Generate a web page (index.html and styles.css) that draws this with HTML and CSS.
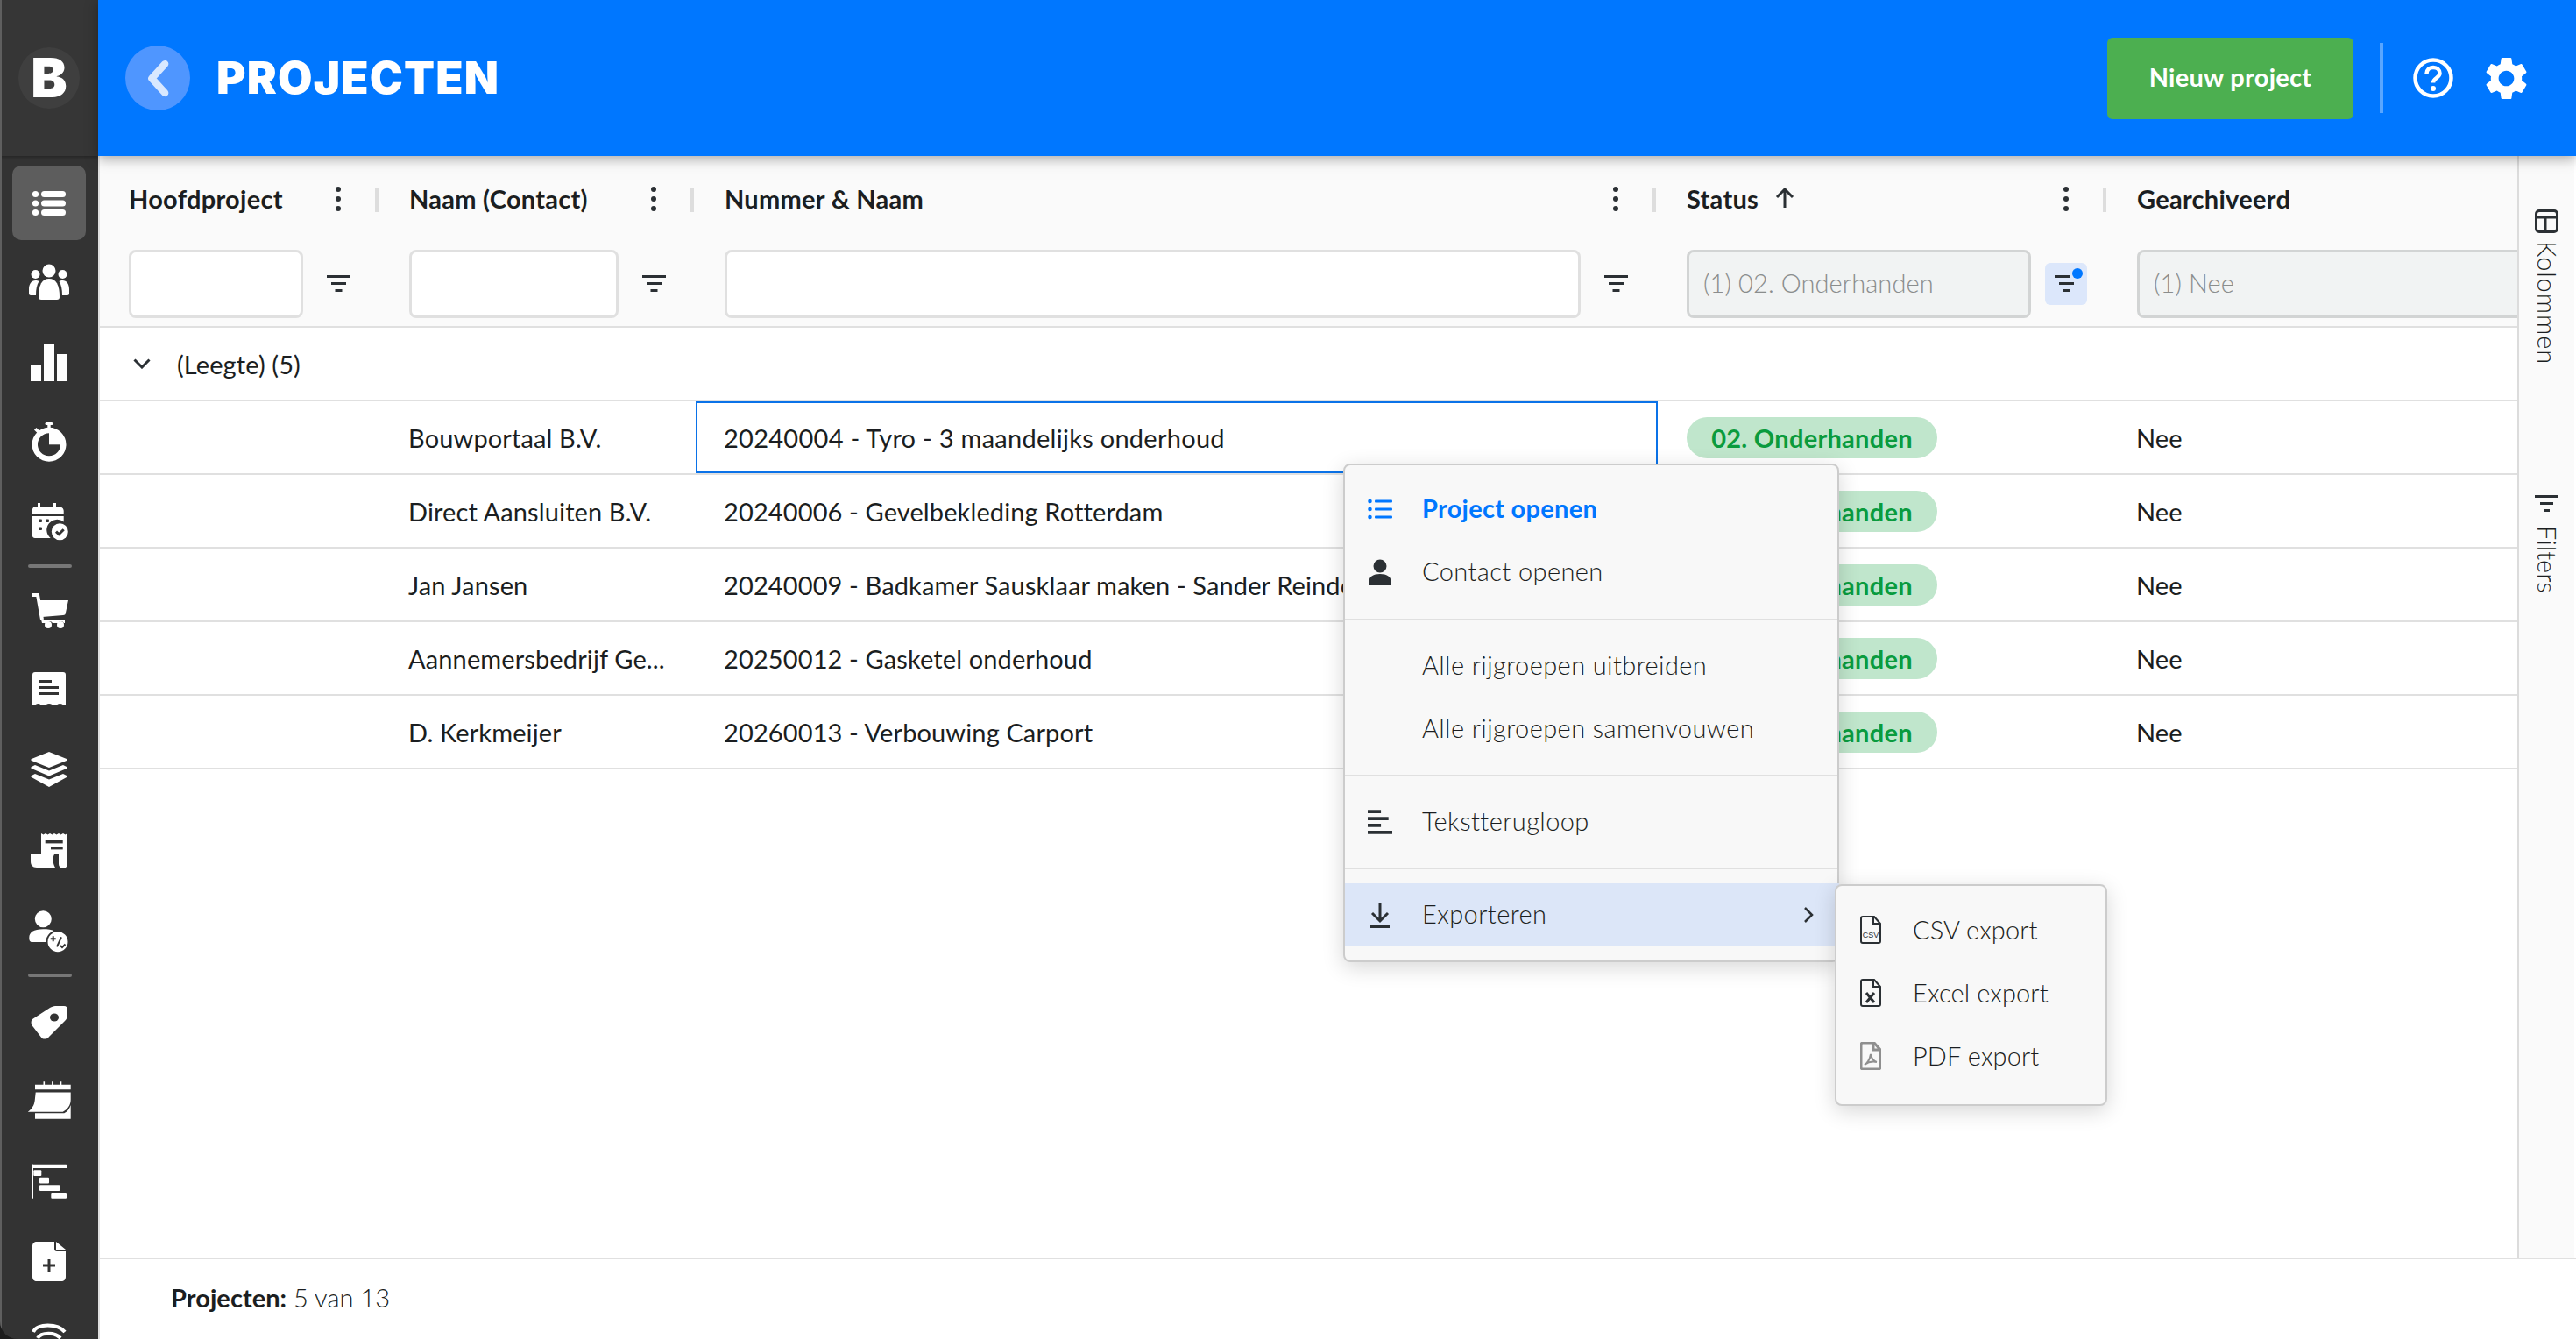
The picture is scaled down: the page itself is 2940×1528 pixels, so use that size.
FILE: index.html
```html
<!DOCTYPE html>
<html lang="nl">
<head>
<meta charset="utf-8">
<title>Projecten</title>
<link rel="stylesheet" href="styles.css">
</head>
<body>
<div class="app">
  <aside class="sidebar">
    <div class="brand"><span class="brand-mark">B</span></div>
    <nav class="nav">
      <a class="nav-item is-active"><svg class="ni" viewBox="0 0 48 48"><circle cx="8.5" cy="13.5" r="3.6"/><circle cx="8.5" cy="24" r="3.6"/><circle cx="8.5" cy="34.500" r="3.6"/><rect x="15" y="10" width="28" height="7" rx="3.500"/><rect x="15" y="20.500" width="28" height="7" rx="3.500"/><rect x="15" y="31" width="28" height="7" rx="3.500"/></svg></a>
      <a class="nav-item"><svg class="ni" viewBox="0 0 48 48"><circle cx="24" cy="10" r="7.500"/><circle cx="8.500" cy="14" r="5"/><circle cx="39.500" cy="14" r="5"/><path d="M12 40c0-14 4-21 12-21s12 7 12 21c0 2-1 3-3 3H15c-2 0-3-1-3-3z"/><path d="M8.500 21c1.500 0 3 .3 4 1-2.500 4-3.500 9-3.500 16H3c-1 0-2-1-2-2v-5c0-6 3-10 7.500-10z"/><path d="M39.500 21c-1.500 0-3 .3-4 1 2.500 4 3.500 9 3.500 16h6c1 0 2-1 2-2v-5c0-6-3-10-7.500-10z"/></svg></a>
      <a class="nav-item"><svg class="ni" viewBox="0 0 48 48"><rect x="3" y="27" width="12" height="18"/><rect x="18" y="3" width="12" height="42"/><rect x="33" y="14" width="12" height="31"/></svg></a>
      <a class="nav-item"><svg class="ni" viewBox="0 0 48 48"><rect x="19.500" y="1" width="9" height="3" rx="1.500"/><rect x="22.300" y="3" width="3.400" height="5"/><path d="M7 9.500l2.500-2.500 4 4-2.500 2.500z"/><path fill-rule="evenodd" d="M24 6.800a19.500 19.500 0 1 1 0 39 19.500 19.500 0 0 1 0-39zm0 6.500a13 13 0 1 0 0 26 13 13 0 0 0 0-26z"/><path d="M24 26.300V13h13.300v13.300z"/></svg></a>
      <a class="nav-item"><svg class="ni" viewBox="0 0 48 48"><rect x="11" y="2" width="3" height="6"/><rect x="29" y="2" width="3" height="6"/><path d="M9 6h26c3 0 5.700 2 5.700 5v4H4.700v-4c0-3 1.300-5 4.300-5zM4.700 17h36v6.500a11.500 11.500 0 0 0-15 18.500H8c-2 0-3.300-1.500-3.300-3.500z"/><g class="ni-dark"><rect x="12" y="20.500" width="4" height="3.500" rx="1"/><rect x="20" y="20.500" width="4" height="3.500" rx="1"/><rect x="12" y="29.500" width="4" height="3.500" rx="1"/></g><circle cx="36.300" cy="34.700" r="9.500"/><path class="ni-cut" d="M32 34.700l3.200 3 5.500-5.500"/></svg></a>
      <div class="nav-rule"></div>
      <a class="nav-item"><svg class="ni" viewBox="0 0 48 48"><path class="ni-line" d="M4 6h7l5 28"/><path d="M13 12h33l-3 14c0 2-1 3-3 3l-24 2zM15 34h27v4h-1a4 4 0 0 0-7 0h-6a4 4 0 0 0-7 0h-5z"/><circle cx="23" cy="40" r="4"/><circle cx="37" cy="40" r="4"/></svg></a>
      <a class="nav-item"><svg class="ni" viewBox="0 0 48 48"><path d="M8 3h32c2 0 3 1 3 3v35c-3 0-4-2-6.500-2s-4 2-6 2-4-2-6.500-2-4 2-6.500 2-4-2-6-2-3.500 2-6.500 2V6c0-2 1-3 3-3z"/><g class="ni-dark"><rect x="13" y="12" width="14" height="3"/><rect x="13" y="19" width="22" height="3"/><rect x="13" y="26" width="22" height="3"/></g></svg></a>
      <a class="nav-item"><svg class="ni" viewBox="0 0 48 48"><path d="M24 3l20 8c1 .5 1 1.500 0 2l-20 8-20-8c-1-.5-1-1.500 0-2z"/><path d="M8 18l16 6.500L40 18l4 2c1 .5 1 1.500 0 2l-20 8.500L4 22c-1-.5-1-1.500 0-2z"/><path d="M8 28l16 6.500L40 28l4 2c1 .5 1 1.500 0 2l-20 11-20-11c-1-.5-1-1.500 0-2z"/></svg></a>
      <a class="nav-item"><svg class="ni" viewBox="0 0 48 48"><path d="M15 5l2.500 1.500L20 5l2.500 1.500L25 5l2.500 1.500L30 5l2.500 1.500L35 5l2.500 1.500L40 5l2.500 1.500L45 5v35a5 5 0 0 1-10 0V28H15z"/><path d="M3 29h27c-2 3-2 10 1 15H10c-5 0-7-3-7-7z"/><g class="ni-dark"><rect x="19.700" y="13" width="20" height="3.400"/><rect x="26" y="20" width="13.700" height="3.400"/></g></svg></a>
      <a class="nav-item"><svg class="ni" viewBox="0 0 48 48"><circle cx="17.300" cy="11.700" r="9.500"/><path d="M1.300 33c0-6 5-9.700 16-9.700 5 0 10 .5 13.700 2.700-6 3-8 7-7 12H5c-3 0-3.700-2-3.700-5z"/><circle cx="34" cy="37.700" r="12.500" class="ni-ring"/><path class="ni-cut2" d="M25.700 34.300h6M28.700 31.300v6M33 43.300l5-11M37 42l2 2 3.500-3.500"/></svg></a>
      <div class="nav-rule nav-rule-wide"></div>
      <a class="nav-item"><svg class="ni" viewBox="0 0 48 48"><path d="M5 21l20-13c2-1 4-2 6-2h10c3 0 4 2 4 4v6c0 3-1 5-3 7L24 41c-2 3-5 3-8 2L6 30c-3-3-3-7-1-9z"/><ellipse class="ni-dark" cx="30" cy="19" rx="5" ry="4.500"/></svg></a>
      <a class="nav-item"><svg class="ni" viewBox="0 0 48 48"><path d="M8 4.700h9.500V1.300h1.600v3.400h8V1.300h1.600v3.400h8V1.300h1.600v3.400h10.400v5.600H8z"/><path d="M8.700 13.500h40V22c0 6-3.500 11-9 13.700H-.3c5-3.500 7.500-8 8-13z"/><path d="M8 37.300h33.300c3.500-1.500 6-5 7.400-9.300v15.700H8z"/></svg></a>
      <a class="nav-item"><svg class="ni" viewBox="0 0 48 48"><rect x="4" y="4.700" width="40" height="4.300" rx=".5"/><rect x="4" y="4.700" width="2" height="39"/><rect x="6.300" y="11.300" width="9" height="6.700" rx="1"/><rect x="13" y="19.700" width="11" height="6.700" rx="1"/><rect x="13" y="28.300" width="23.300" height="6.700" rx="1"/><rect x="26.300" y="37" width="17.700" height="6.700" rx="1"/></svg></a>
      <a class="nav-item"><svg class="ni" viewBox="0 0 48 48"><path d="M10 2h20v8c0 2 1 3 3 3h10v29c0 3-2 5-5 5H10c-3 0-5-2-5-5V7c0-3 2-5 5-5zM32 2l11 9H32z"/><path class="ni-cut" d="M17 29h14M24 22v14"/></svg></a>
      <a class="nav-item"><svg class="ni" viewBox="0 0 48 48"><path class="ni-line" d="M6 14c4-10 28-10 36 0M11 21c4-7 20-7 26 0M17 27c3-3 11-3 14 0"/></svg></a>
    </nav>
  </aside>

  <main class="main">
    <header class="topbar">
      <a class="back"><svg viewBox="0 0 40 60" class="back-icon"><path d="M31 8L11 30l20 22"/></svg></a>
      <h1 class="title">PROJECTEN</h1>
      <div class="top-actions">
        <button class="btn-new">Nieuw project</button>
        <span class="top-rule"></span>
        <svg class="top-icon top-help" viewBox="0 0 46 46"><circle cx="23" cy="23" r="20.500"/><path d="M15.500 18c0-4 3-7 7.500-7s7.500 3 7.500 6.500c0 5.500-7.500 5.500-7.500 11"/><circle class="dot" cx="23" cy="35" r="3"/></svg>
        <svg class="top-gear" viewBox="0 0 24 24"><path d="M19.140 12.940c.04-.3.060-.61.060-.94 0-.32-.02-.64-.07-.94l2.030-1.580a.49.49 0 0 0 .12-.61l-1.920-3.320a.488.488 0 0 0-.59-.22l-2.390.96c-.5-.38-1.030-.7-1.620-.94l-.36-2.540a.484.484 0 0 0-.48-.41h-3.840c-.24 0-.43.17-.47.41l-.36 2.540c-.59.24-1.130.57-1.620.94l-2.390-.96c-.22-.08-.47 0-.59.22L2.740 8.870c-.12.21-.08.47.12.61l2.030 1.580c-.05.3-.09.63-.09.94s.02.64.07.94l-2.030 1.580a.49.49 0 0 0-.12.61l1.920 3.320c.12.22.37.29.59.22l2.390-.96c.5.38 1.030.7 1.620.94l.36 2.540c.05.24.24.41.48.41h3.840c.24 0 .44-.17.47-.41l.36-2.540c.59-.24 1.130-.56 1.620-.94l2.390.96c.22.08.47 0 .59-.22l1.920-3.320c.12-.22.07-.47-.12-.61l-2.010-1.580zM12 15.600c-1.980 0-3.600-1.620-3.600-3.600s1.620-3.600 3.600-3.600 3.600 1.620 3.600 3.600-1.620 3.600-3.600 3.600z"/></svg>
      </div>
    </header>

    <div class="content">
      <section class="grid">
        <div class="thead">
          <div class="th">
            <div class="th-label"><span class="th-text">Hoofdproject</span><span class="kebab"><i></i><i></i><i></i></span><span class="th-sep"></span></div>
            <div class="th-filter"><span class="input"></span><span class="fbtn"><svg class="ficon" viewBox="0 0 27 20"><path d="M0 1.500h27M5 9.500h17M9.500 17.500h8"/></svg></span></div>
          </div>
          <div class="th">
            <div class="th-label"><span class="th-text">Naam (Contact)</span><span class="kebab"><i></i><i></i><i></i></span><span class="th-sep"></span></div>
            <div class="th-filter"><span class="input"></span><span class="fbtn"><svg class="ficon" viewBox="0 0 27 20"><path d="M0 1.500h27M5 9.500h17M9.500 17.500h8"/></svg></span></div>
          </div>
          <div class="th">
            <div class="th-label"><span class="th-text">Nummer &amp; Naam</span><span class="kebab"><i></i><i></i><i></i></span><span class="th-sep"></span></div>
            <div class="th-filter"><span class="input"></span><span class="fbtn"><svg class="ficon" viewBox="0 0 27 20"><path d="M0 1.500h27M5 9.500h17M9.500 17.500h8"/></svg></span></div>
          </div>
          <div class="th">
            <div class="th-label"><span class="th-text">Status</span><svg class="sort" viewBox="0 0 22 24"><path d="M11 23V2M2 11l9-9 9 9"/></svg><span class="kebab"><i></i><i></i><i></i></span><span class="th-sep"></span></div>
            <div class="th-filter"><span class="input is-set">(1) 02. Onderhanden</span><span class="fbtn is-on"><svg class="ficon" viewBox="0 0 27 20"><path d="M0 1.500h18M5 9.500h17M9.500 17.500h8"/></svg><b class="fdot"></b></span></div>
          </div>
          <div class="th th-last">
            <div class="th-label"><span class="th-text">Gearchiveerd</span></div>
            <div class="th-filter"><span class="input is-set is-wide">(1) Nee</span></div>
          </div>
        </div>

        <div class="group"><svg class="chev" viewBox="0 0 20 12"><path d="M1.500 1.500L10 10l8.500-8.500"/></svg><span>(Leegte) (5)</span></div>

        <div class="row"><div class="td"></div><div class="td">Bouwportaal B.V.</div><div class="td is-focus">20240004 - Tyro - 3 maandelijks onderhoud</div><div class="td"><span class="pill">02. Onderhanden</span></div><div class="td">Nee</div></div>
        <div class="row"><div class="td"></div><div class="td">Direct Aansluiten B.V.</div><div class="td">20240006 - Gevelbekleding Rotterdam</div><div class="td"><span class="pill">02. Onderhanden</span></div><div class="td">Nee</div></div>
        <div class="row"><div class="td"></div><div class="td">Jan Jansen</div><div class="td">20240009 - Badkamer Sausklaar maken - Sander Reinders</div><div class="td"><span class="pill">02. Onderhanden</span></div><div class="td">Nee</div></div>
        <div class="row"><div class="td"></div><div class="td">Aannemersbedrijf Ge...</div><div class="td">20250012 - Gasketel onderhoud</div><div class="td"><span class="pill">02. Onderhanden</span></div><div class="td">Nee</div></div>
        <div class="row"><div class="td"></div><div class="td">D. Kerkmeijer</div><div class="td">20260013 - Verbouwing Carport</div><div class="td"><span class="pill">02. Onderhanden</span></div><div class="td">Nee</div></div>
      </section>

      <aside class="tools">
        <div class="tool tool-cols"><svg class="tool-icon" viewBox="0 0 27 27"><rect x="1.500" y="1.500" width="24" height="24" rx="3.500"/><path d="M1.500 9h24M12 9v16.500"/></svg><span>Kolommen</span></div>
        <div class="tool tool-filt"><svg class="tool-icon" viewBox="0 0 27 20"><path d="M0 1.500h27M6 9.500h15M10 17.500h7"/></svg><span>Filters</span></div>
      </aside>
    </div>

    <footer class="footer"><strong>Projecten:</strong>&nbsp;5 van 13</footer>
  </main>

  <div class="menu menu-main">
    <div class="menu-group">
      <div class="mi is-blue"><svg class="mi-icon" viewBox="0 0 28 24"><circle cx="2.500" cy="3" r="2.300"/><circle cx="2.500" cy="12" r="2.300"/><circle cx="2.500" cy="21" r="2.300"/><rect x="8" y="1.500" width="20" height="3" rx="1"/><rect x="8" y="10.500" width="20" height="3" rx="1"/><rect x="8" y="19.500" width="20" height="3" rx="1"/></svg><span>Project openen</span></div>
      <div class="mi"><svg class="mi-icon" viewBox="0 0 28 30"><circle cx="14" cy="8" r="7.500"/><path d="M1.500 30v-5c0-5 5-8 12.500-8s12.500 3 12.500 8v5z"/></svg><span>Contact openen</span></div>
    </div>
    <div class="menu-group">
      <div class="mi"><i class="mi-blank"></i><span>Alle rijgroepen uitbreiden</span></div>
      <div class="mi"><i class="mi-blank"></i><span>Alle rijgroepen samenvouwen</span></div>
    </div>
    <div class="menu-group">
      <div class="mi"><svg class="mi-icon" viewBox="0 0 26 26"><path d="M0 2h14M0 9.500h22M0 16.500h14M0 24h26" class="mi-stroke"/></svg><span>Tekstterugloop</span></div>
    </div>
    <div class="menu-group">
      <div class="mi is-hover"><svg class="mi-icon" viewBox="0 0 24 30"><path d="M12 1v20M3 13l9 9 9-9M1 28.500h22" class="mi-stroke mi-thin"/></svg><span>Exporteren</span><svg class="mi-chev" viewBox="0 0 12 20"><path d="M2 2l8 8-8 8"/></svg></div>
    </div>
  </div>

  <div class="menu menu-sub">
    <div class="menu-group">
      <div class="mi mi-sub"><svg class="file-icon" viewBox="0 0 24 32"><path d="M3 1h13l7 8v20c0 1-1 2-2 2H3c-1 0-2-1-2-2V3c0-1 1-2 2-2zM15 1v8h8"/><text x="12" y="25" class="file-label">CSV</text></svg><span>CSV export</span></div>
      <div class="mi mi-sub"><svg class="file-icon" viewBox="0 0 24 32"><path d="M3 1h13l7 8v20c0 1-1 2-2 2H3c-1 0-2-1-2-2V3c0-1 1-2 2-2zM15 1v8h8"/><path d="M7 16l9 11M16 16l-9 11" class="file-x"/></svg><span>Excel export</span></div>
      <div class="mi mi-sub"><svg class="file-icon is-gray" viewBox="0 0 24 32"><path d="M3 1h13l7 8v20c0 1-1 2-2 2H3c-1 0-2-1-2-2V3c0-1 1-2 2-2zM15 1v8h8"/><path d="M5 26c3-1 6-6 7-12 1 5 3 8 7 9-5-1-10 0-14 3z" class="file-pdf"/></svg><span>PDF export</span></div>
    </div>
  </div>
</div>
</body>
</html>
```

FILE: styles.css
```css
* { box-sizing: border-box; }
html, body { margin: 0; height: 100%; overflow: hidden; background: #1c1c1c; }
body { font-family: Lato, "Noto Sans", sans-serif; font-size: 29px; letter-spacing: .27px; color: #1b1e21; }

.app { position: relative; display: flex; height: 100vh; overflow: hidden; border-bottom-left-radius: 20px; }

/* sidebar */
.sidebar { flex: 0 0 112px; display: flex; flex-direction: column; background: #333; border-left: 2px solid #5f5f5f; height: 100%; overflow: hidden; }
.brand { flex: 0 0 178px; display: flex; align-items: center; justify-content: center; background: #363636; box-shadow: 0 2px 3px rgba(0,0,0,.25); margin-left: -2px; }
.brand-mark { width: 70px; height: 70px; border-radius: 50%; background: #3f3f3f; color: #fff; font-family: Inter, sans-serif; font-weight: 900; font-size: 62px; letter-spacing: 0; line-height: 70px; text-align: center; }
.nav { display: flex; flex-direction: column; gap: 6px; padding-top: 11px; margin-left: -2px; }
.nav-item { flex: 0 0 85px; width: 84px; margin-left: 14px; display: flex; align-items: center; justify-content: center; border-radius: 10px; }
.nav-item.is-active { background: #5d5d5d; }
.nav-rule { height: 4px; width: 50px; margin-left: 32px; background: #777; border-radius: 2px; flex: none; }
.nav-rule-wide { margin-top: 2px; margin-bottom: 2px; }
.ni { width: 48px; height: 48px; fill: #fff; overflow: visible; flex: none; }
.ni-dark { fill: #333; }
.ni-line { fill: none; stroke: #fff; stroke-width: 4; }
.ni-cut { fill: none; stroke: #333; stroke-width: 3; }
.ni-cut2 { fill: none; stroke: #333; stroke-width: 2; }
.ni-ring { stroke: #333; stroke-width: 2; }

/* main */
.main { flex: 1; min-width: 0; display: flex; flex-direction: column; background: #fff; }
.topbar { position: relative; z-index: 2; flex: 0 0 178px; display: flex; align-items: center; padding-left: 31px; padding-right: 50px; background: #0077ff; box-shadow: 0 3px 14px rgba(0,0,0,.35); }
.back { width: 74px; height: 74px; border-radius: 50%; background: #4f96ff; display: flex; align-items: center; justify-content: center; }
.back-icon { width: 30px; height: 45px; fill: none; stroke: #d9e8ff; stroke-width: 11; stroke-linejoin: round; stroke-linecap: round; }
.title { margin: 0 0 0 30px; color: #fff; font-family: Inter, sans-serif; font-weight: 900; font-size: 51px; line-height: 60px; letter-spacing: 1.2px; }
.top-actions { margin-left: auto; display: flex; align-items: center; }
.btn-new { width: 281px; height: 93px; border: 0; border-radius: 6px; background: #4caf50; color: #fff; font-family: Lato, sans-serif; font-size: 29px; letter-spacing: .27px; font-weight: 700; padding: 0 0 3px; }
.top-rule { width: 4px; height: 80px; margin: 0 34px 0 30px; background: rgba(255,255,255,.35); }
.top-help { width: 46px; height: 46px; fill: none; stroke: #fff; stroke-width: 4.500; }
.top-help .dot { fill: #fff; stroke: none; }
.top-gear { width: 59px; height: 59px; fill: #fff; margin-left: 31px; }

/* content */
.content { flex: 1; min-height: 0; display: flex; border-left: 2px solid #e0e0e0; }
.grid { flex: 1; min-width: 0; overflow: hidden; background: #fff; }
.thead, .row { display: grid; grid-template-columns: 320px 360px 1098px 514px 1fr; }
.thead { background: #fafafa; border-bottom: 2px solid #e0e0e0; height: 196px; }
.th { min-width: 0; display: flex; flex-direction: column; padding-top: 28px; overflow: hidden; }
.th-label { height: 40px; display: flex; align-items: center; padding-left: 33px; position: relative; }
.th-text { font-weight: 700; white-space: nowrap; }
.sort { width: 22px; height: 24px; margin-left: 19px; fill: none; stroke: #2b3034; stroke-width: 3; }
.kebab { position: absolute; right: 45px; top: 7px; width: 6px; height: 28px; display: flex; flex-direction: column; justify-content: space-between; }
.kebab i { display: block; width: 6px; height: 6px; border-radius: 50%; background: #2b3034; }
.th-sep { position: absolute; right: 2px; top: 8px; width: 4px; height: 28px; background: #ddd; }
.th-filter { margin-top: 39px; height: 78px; display: flex; align-items: center; padding-left: 33px; }
.input { flex: 1; min-width: 0; height: 78px; border: 3px solid #e0e0e0; border-radius: 8px; background: #fff; display: flex; align-items: center; padding: 0 0 4px 16px; white-space: nowrap; color: #8a8d8d; font-weight: 300; letter-spacing: .1px; }
.input.is-set { background: #f1f3f3; border-color: #d2d4d4; }
.input.is-wide { flex: none; width: 520px; }
.fbtn { position: relative; flex: 0 0 80px; margin-right: 8px; height: 48px; display: flex; align-items: center; justify-content: center; }
.fbtn.is-on::before { content: ""; position: absolute; left: 16px; top: 0; width: 48px; height: 48px; background: #dce7fb; border-radius: 6px; }
.ficon { position: relative; width: 27px; height: 20px; fill: none; stroke: #2b3034; stroke-width: 3; }
.fdot { position: absolute; left: 47px; top: 6px; width: 12px; height: 12px; border-radius: 50%; background: #0077ff; }

.group { height: 84px; display: flex; align-items: center; padding-left: 38px; gap: 30px; border-bottom: 2px solid #e0e0e0; letter-spacing: .1px; }
.chev { width: 20px; height: 12px; fill: none; stroke: #2b3034; stroke-width: 3; }
.row { height: 84px; border-bottom: 2px solid #e0e0e0; }
.td { min-width: 0; display: flex; align-items: center; padding-left: 32px; white-space: nowrap; overflow: hidden; letter-spacing: .12px; }
.td.is-focus { border: 2px solid #0a72e8; padding-left: 30px; height: 82px; letter-spacing: .27px; }
.pill { height: 47px; width: 286px; margin-left: 1px; border-radius: 24px; background: #c0e6cc; color: #0a9b3e; font-weight: 700; letter-spacing: .27px; display: flex; align-items: center; justify-content: center; }

/* right tools */
.tools { flex: 0 0 67px; display: flex; flex-direction: column; background: #fafafa; border-left: 2px solid #dcdcdc; border-right: 2px solid #fff; padding-top: 61px; }
.tool { display: flex; flex-direction: column; align-items: center; }
.tool span { writing-mode: vertical-rl; font-weight: 300; line-height: 28px; }
.tool-cols span { letter-spacing: .9px; }
.tool-filt span { letter-spacing: 0; }
.tool-icon { width: 27px; fill: none; stroke: #2b3034; stroke-width: 3; }
.tool-cols .tool-icon { height: 27px; margin-bottom: 9px; }
.tool-filt { margin-top: 149px; }
.tool-filt .tool-icon { height: 20px; margin-bottom: 15px; }

/* footer */
.footer { flex: 0 0 93px; display: flex; align-items: center; padding: 0 0 4px 81px; border-top: 2px solid #e0e0e0; border-left: 2px solid #e0e0e0; background: #fff; white-space: pre; font-weight: 300; letter-spacing: .05px; }
.footer strong { font-weight: 700; }

/* context menus */
.menu { position: absolute; z-index: 5; background: #f8f8f8; border: 2px solid #ccc; border-radius: 8px; box-shadow: 0 6px 24px rgba(0,0,0,.16); }
.menu-main { left: 1533px; top: 529px; width: 566px; }
.menu-sub { left: 2094px; top: 1009px; width: 311px; height: 253px; z-index: 6; }
.menu-group { padding: 16px 0; border-bottom: 2px solid #e0e0e0; }
.menu-group:first-child { padding: 14px 0 17px; }
.menu-group:last-child { border-bottom: 0; }
.mi { position: relative; height: 72px; display: flex; align-items: center; padding-left: 26px; font-weight: 300; letter-spacing: .4px; color: #1b1e21; white-space: nowrap; }
.mi > span { margin-bottom: 3px; }
.mi-icon { flex: none; width: 28px; height: 30px; margin-right: 34px; fill: #2b3034; }
.mi-blank { flex: none; width: 28px; margin-right: 34px; }
.mi.is-blue { color: #0077ff; font-weight: 700; letter-spacing: .27px; }
.mi.is-blue .mi-icon { fill: #0077ff; height: 24px; }
.mi-stroke { fill: none; stroke: #2b3034; stroke-width: 3.500; }
.mi-thin { stroke-width: 3; }
.mi.is-hover { background: #dce6f8; margin-right: -2px; }
.mi-chev { position: absolute; right: 29px; width: 12px; height: 20px; fill: none; stroke: #2b3034; stroke-width: 2.500; }
.mi-sub { padding-left: 27px; letter-spacing: .1px; }
.mi-sub > span { margin-bottom: 1px; }
.file-icon { flex: none; width: 24px; height: 32px; margin-right: 36px; fill: none; stroke: #2b3034; stroke-width: 2; }
.file-icon.is-gray { stroke: #8f8f8f; stroke-width: 3; }
.file-label { fill: #2b3034; stroke: none; font-family: "Liberation Sans", sans-serif; font-size: 9px; letter-spacing: 0; text-anchor: middle; }
.file-x { stroke-width: 3; }
.file-pdf { stroke-width: 2; }
```
